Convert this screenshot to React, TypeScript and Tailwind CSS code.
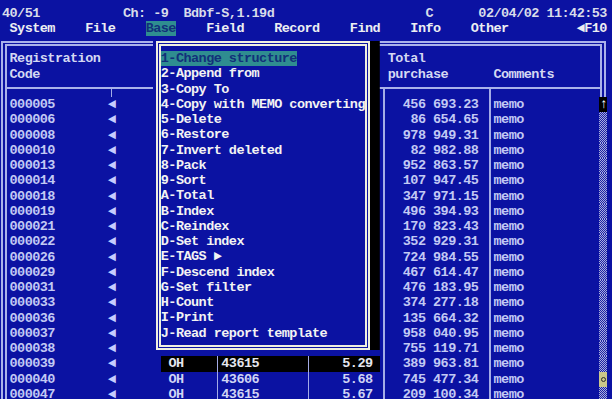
import React from "react";

const at = (parts: [number, string][], len = 0) => {
  let s = "";
  for (const [c, t] of parts) s = s.padEnd(c, " ") + t;
  return s.padEnd(len, " ");
};

const data: [string, string][] = [
  ["000005", "456 693.23"],
  ["000006", "86 654.65"],
  ["000008", "978 949.31"],
  ["000010", "82 982.88"],
  ["000013", "952 863.57"],
  ["000014", "107 947.45"],
  ["000018", "347 971.15"],
  ["000019", "496 394.93"],
  ["000021", "170 823.43"],
  ["000022", "352 929.31"],
  ["000026", "724 984.55"],
  ["000029", "467 614.47"],
  ["000031", "476 183.95"],
  ["000033", "374 277.18"],
  ["000036", "135 664.32"],
  ["000037", "958 040.95"],
  ["000038", "755 119.71"],
  ["000039", "389 963.81"],
  ["000040", "745 477.34"],
  ["000047", "209 100.34"],
];

const extras: Record<number, [string, string, string]> = {
  17: ["OH", "43615", "5.29"],
  18: ["OH", "43606", "5.68"],
  19: ["OH", "43615", "5.67"],
};

const menuItems = [
  "1-Change structure",
  "2-Append from",
  "3-Copy To",
  "4-Copy with MEMO converting",
  "5-Delete",
  "6-Restore",
  "7-Invert deleted",
  "8-Pack",
  "9-Sort",
  "A-Total",
  "B-Index",
  "C-Reindex",
  "D-Set index",
  "E-TAGS \u25BA",
  "F-Descend index",
  "G-Set filter",
  "H-Count",
  "I-Print",
  "J-Read report template",
];

function Divider() {
  return (
    <div className="w-[7.5625px] shrink-0 flex justify-center">
      <div className="w-[1.5px] h-full bg-[#a4ace6]" />
    </div>
  );
}

function ScrollCell({ i }: { i: number }) {
  if (i === 0) {
    return (
      <div className="w-[7.5625px] shrink-0 bg-black text-white text-center">{"\u2191"}</div>
    );
  }
  if (i === 18) {
    return (
      <div className="w-[7.5625px] shrink-0 bg-[#cbc68a] flex items-center justify-center">
        <span className="w-[5px] h-[5px] rounded-full border border-[#2a2a2a]" />
      </div>
    );
  }
  return (
    <div className="w-[7.5625px] shrink-0 bg-[repeating-conic-gradient(#a9aedc_0%_25%,#1a22a6_0%_50%)] bg-[length:2px_2px]" />
  );
}

function DataRow({ i, code, total }: { i: number; code: string; total: string }) {
  const ex = extras[i];
  const shadow = i === 17;
  return (
    <div className="flex h-[15.25px] w-[597.4375px] whitespace-pre">
      <div className="w-[98.3125px] shrink-0">{code}</div>
      <div className="w-[7.5625px] shrink-0 text-center text-[#c6ccff]">{"\u25C4"}</div>
      <div className="w-[45.375px] shrink-0" />
      <div className={shadow ? "flex bg-black text-[#e4e6ee]" : "flex text-[#d0d4f4]"}>
        <div className="w-[52.9375px] shrink-0 pl-[7.5625px]">{ex ? ex[0] : ""}</div>
        <Divider />
        <div className="w-[83.1875px] shrink-0">{ex ? ex[1] : ""}</div>
        <Divider />
        <div className="w-[68.0625px] shrink-0 text-right pr-[7.5625px]">{ex ? ex[2] : ""}</div>
      </div>
      <Divider />
      <div className="w-[98.3125px] shrink-0 text-right pr-[7.5625px]">{total}</div>
      <Divider />
      <div className="w-[105.875px] shrink-0">memo</div>
      <ScrollCell i={i} />
    </div>
  );
}

function TickCell() {
  return (
    <div className="w-[7.5625px] shrink-0 flex justify-center">
      <div className="w-[1.5px] h-full bg-[#a4ace6]" />
    </div>
  );
}

export default function App() {
  const status = at([
    [0, "40/51"],
    [16, "Ch: -9"],
    [24, "Bdbf-S,1.19d"],
    [56, "C"],
    [63, "02/04/02 11:42:53"],
  ]);
  const before = at(
    [
      [1, "System"],
      [11, "File"],
    ],
    19
  );
  const after = at([
    [27 - 23, "Field"],
    [36 - 23, "Record"],
    [46 - 23, "Find"],
    [54 - 23, "Info"],
    [62 - 23, "Other"],
    [76 - 23, "\u25C4F10"],
  ]);

  return (
    <div className="relative w-[612px] h-[399px] overflow-hidden bg-[#0b12a2] pt-[5.5px] pl-[2px] font-['Liberation_Mono','DejaVu_Sans_Mono',monospace] text-[13.5px] font-bold leading-[15.25px] tracking-[-0.54px] text-[#c2c9f4]">
      <div className="h-[15.25px] whitespace-pre text-[#d8dcea]">{status}</div>
      <div className="h-[15.25px] whitespace-pre text-[#eceef2]">
        {before}
        <span className="bg-[#2f8d90] text-[#12307a]">Base</span>
        {after}
      </div>

      <div className="mt-[5px] -ml-[1px] w-[604.5px] border-double border-[#aab2ea] border-l-[6px] border-r-[6px] border-t-[5px] pt-[5.25px] pl-[2.5625px]">
        <div className="h-[15.25px] whitespace-pre text-[#d4d8f2]">
          {at([
            [0, "Registration"],
            [50, "Total"],
          ])}
        </div>
        <div className="h-[15.25px] whitespace-pre text-[#d4d8f2]">
          {at([
            [0, "Code"],
            [50, "purchase"],
            [64, "Comments"],
          ])}
        </div>
        <div className="h-[15.25px] pt-[5.2px] -ml-[2.5625px] w-[592.5px]">
          <div className="flex h-full border-t-2 border-[#aab2ea] pl-[2.5625px]">
            <div className="w-[98.3125px] shrink-0" />
            <TickCell />
            <div className="w-[98.3125px] shrink-0" />
            <TickCell />
            <div className="w-[83.1875px] shrink-0" />
            <TickCell />
            <div className="w-[68.0625px] shrink-0" />
            <TickCell />
            <div className="w-[98.3125px] shrink-0" />
            <TickCell />
          </div>
        </div>
        {data.map(([code, total], i) => (
          <DataRow key={code} i={i} code={code} total={total} />
        ))}
      </div>

      <div className="absolute left-[153.25px] top-[36px] w-[219.3125px] h-[320.25px] bg-[#0b12a2] px-[2.25px] pt-[4.7px]">
        <div className="h-[309.8px] border-[5px] border-double border-[#efefe0] pl-[0.3px] pt-[5.55px] shadow-[9.8px_0_0_0_#000] text-[#f3f3f3]">
          {menuItems.map((m, i) => (
            <div key={m} className="h-[15.25px] whitespace-pre">
              {i === 0 ? <span className="bg-[#2f8d90] text-[#12307a]">{m}</span> : m}
            </div>
          ))}
        </div>
      </div>
    </div>
  );
}
